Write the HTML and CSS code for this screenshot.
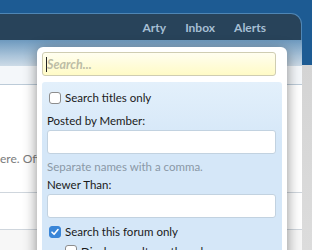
FILE: index.html
```html
<!DOCTYPE html>
<html lang="en">
<head>
    <meta charset="UTF-8">
    <title>Search</title>
    <link rel="stylesheet" href="styles.css">
</head>
<body>
    <div class="page">
        <div class="navbar">
            <a href="#" class="nav-link">Arty</a>
            <a href="#" class="nav-link">Inbox</a>
            <a href="#" class="nav-link">Alerts</a>
        </div>
        <div class="subbar"></div>
        <div class="content">
            <div class="row row-top"></div>
            <div class="row row-text"><p>ere. Off</p></div>
            <div class="row row-mid"></div>
            <div class="row row-end"></div>
        </div>
    </div>

    <div class="popup">
        <div class="search-box"><span class="caret"></span><span class="placeholder">Search...</span></div>
        <div class="panel">
            <label class="check"><span class="box"></span>Search titles only</label>
            <div class="field-label">Posted by Member:</div>
            <div class="text-input"></div>
            <div class="hint">Separate names with a comma.</div>
            <div class="field-label">Newer Than:</div>
            <div class="text-input"></div>
            <label class="check"><span class="box checked"><svg width="10" height="10" viewBox="0 0 10 10"><path d="M2 5.2 L4.1 7.3 L8 2.6" fill="none" stroke="#fff" stroke-width="1.6" stroke-linecap="round" stroke-linejoin="round"/></svg></span>Search this forum only</label>
            <label class="check sub"><span class="box"></span>Display results as threads</label>
        </div>
    </div>
</body>
</html>
```

FILE: styles.css
```css
body {
    margin: 0;
    font-family: Lato, "Liberation Sans", sans-serif;
    background: linear-gradient(#1d5b93 0, #1d5b93 65px, #d4d4d4 65px, #dcdcdc 100%);
    height: 250px;
    overflow: hidden;
}

.page {
    width: 302px;
    padding-top: 13px;
}

.navbar {
    height: 26px;
    background: #28435a;
    border-top: 1px solid #4f86b5;
    border-right: 1px solid #4f86b5;
    border-radius: 0 11px 0 0;
    display: flex;
    justify-content: flex-end;
    align-items: center;
    padding-right: 35px;
}
.nav-link {
    color: #a6bfd4;
    font-weight: bold;
    font-size: 12px;
    text-decoration: none;
    margin-left: 19px;
}

.subbar {
    height: 26px;
    background: linear-gradient(#6d99be, #a9c3d9 60%, #cddbe7);
}

.content {
    background: #fff;
    height: 200px;
}
.row {
    border-bottom: 1px solid #cfd6dd;
}
.row-top {
    height: 18px;
    background: #f4f7fa;
    border-bottom-color: #bccbd8;
}
.row-text {
    height: 107px;
    display: flex;
    align-items: center;
}
.row-text p {
    margin: 0;
    width: 37px;
    overflow: hidden;
    font-size: 12px;
    color: #7b7b7b;
    white-space: nowrap;
    padding-top: 40px;
}
.row-mid {
    height: 36px;
}
.row-end {
    height: 30px;
    border: none;
    background: #f7f7f7;
}

.popup {
    position: absolute;
    left: 37px;
    top: 47px;
    width: 240px;
    height: 210px;
    padding: 5px;
    background: #fff;
    border-radius: 6px;
    box-shadow: 0 3px 14px rgba(0, 0, 0, 0.45);
}

.search-box {
    width: 229px;
    height: 22px;
    border: 1px solid #cfcdb2;
    border-radius: 3px;
    background: linear-gradient(#fffef0, #fffbc6);
    display: flex;
    align-items: center;
    padding-left: 3px;
    box-sizing: content-box;
}
.caret {
    width: 1px;
    height: 15px;
    background: #222;
}
.placeholder {
    font-size: 12.5px;
    font-style: italic;
    font-weight: bold;
    color: #bdbda6;
}

.panel {
    margin-top: 6px;
    background: linear-gradient(#e3f0fb, #d5e7f8 60px);
    border-radius: 3px;
    padding: 4px 6px 0 5px;
    height: 200px;
    font-size: 11.5px;
    color: #1a1a1a;
}

.check {
    display: flex;
    align-items: center;
    height: 23px;
    margin-left: 2px;
}
.check.sub {
    margin-left: 18px;
    height: 16px;
}
.box {
    flex: none;
    width: 10px;
    height: 10px;
    border: 1px solid #8d8d8d;
    border-radius: 3px;
    background: #fff;
    margin-right: 4px;
    display: flex;
    align-items: center;
    justify-content: center;
}
.box.checked {
    background: #3a86d8;
    border-color: #3a86d8;
}

.field-label {
    margin-top: 3px;
    height: 17px;
    line-height: 17px;
}
.text-input {
    width: 227px;
    height: 22px;
    background: #fff;
    border: 1px solid #c2d2e0;
    border-radius: 3px;
    margin-top: 1px;
}
.hint {
    color: #8a98a6;
    height: 23px;
    line-height: 23px;
    margin-top: 1px;
}
.hint + .field-label {
    margin-top: -2px;
}
.text-input + .check {
    margin-top: 2px;
}
```
